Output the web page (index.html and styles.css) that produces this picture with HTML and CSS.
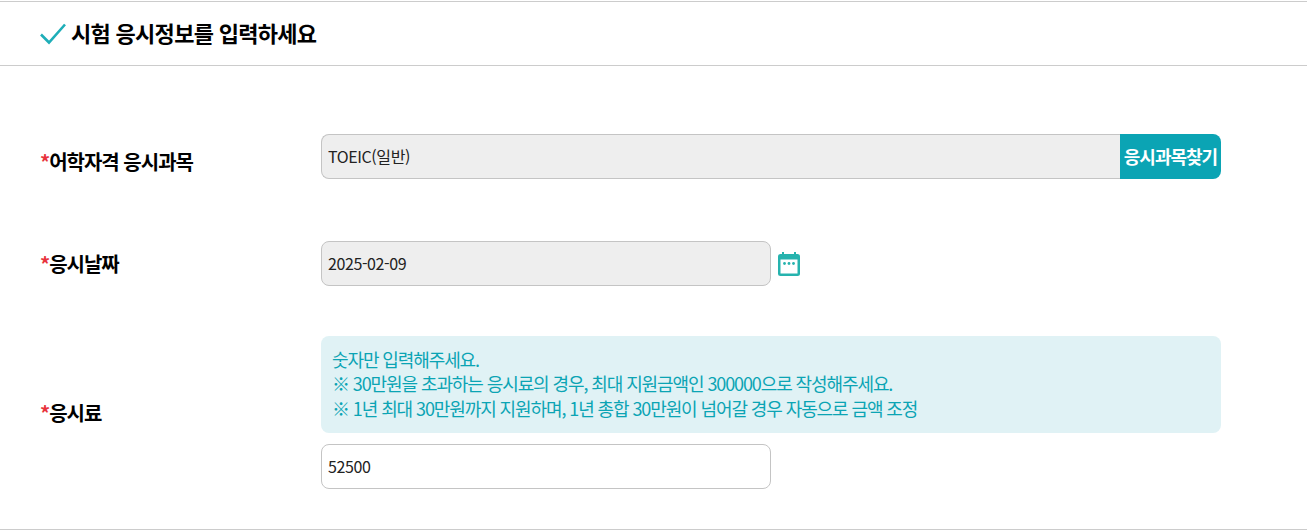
FILE: index.html
```html
<!DOCTYPE html>
<html lang="ko">

	<head>
		<meta charset="utf-8" />
		<title>시험 응시정보</title>
		<link rel="stylesheet" href="styles.css">
	</head>

	<body>
		<div class="title">
			<svg class="check" width="26" height="22" viewBox="0 0 26 22">
				<path d="M1 11.500L9 19.500L25 1.500" fill="none" stroke="#1eaeb8" stroke-width="2.600" />
			</svg>
			<h2>시험 응시정보를 입력하세요</h2>
		</div>
		<div class="form">
			<div class="row row-subject">
				<label class="name"><span class="req">*</span>어학자격 응시과목</label>
				<div class="field">
					<div class="search">
						<input class="box box-search" type="text" value="TOEIC(일반)" readonly>
						<a href="#" class="btn">응시과목찾기</a>
					</div>
				</div>
			</div>
			<div class="row row-date">
				<label class="name"><span class="req">*</span>응시날짜</label>
				<div class="field date">
					<input class="box half" type="text" value="2025-02-09" readonly>
					<svg class="cal" width="24" height="26" viewBox="0 0 24 26">
						<path d="M5 1h2v3H5zM17 1h2v3h-2z" fill="#26b3ae" />
						<rect x="1" y="3" width="22" height="22" rx="2.500" fill="#26b3ae" />
						<rect x="3.500" y="8.500" width="17" height="14" fill="#fff" />
						<circle cx="7.500" cy="12.500" r="1.400" fill="#26b3ae" />
						<circle cx="12" cy="12.500" r="1.400" fill="#26b3ae" />
						<circle cx="16.500" cy="12.500" r="1.400" fill="#26b3ae" />
					</svg>
				</div>
			</div>
			<div class="row row-fee">
				<label class="name"><span class="req">*</span>응시료</label>
				<div class="field">
					<div class="notice">
						숫자만 입력해주세요.<br>
						※ 30만원을 초과하는 응시료의 경우, 최대 지원금액인 300000으로 작성해주세요.<br>
						※ 1년 최대 30만원까지 지원하며, 1년 총합 30만원이 넘어갈 경우 자동으로 금액 조정
					</div>
					<input class="box half white" type="text" value="52500">
				</div>
			</div>
		</div>
	</body>

</html>
```

FILE: styles.css
```css
* {
	margin: 0;
	padding: 0;
	box-sizing: border-box;
}

a {
	text-decoration: none;
}

body {
	height: 529px;
	overflow: hidden;
	background: #fff;
	font-family: "Noto Sans CJK KR", "Noto Sans", sans-serif;
	color: #000;
	margin-top: 1px;
	border-top: 1px solid #ccc;
	border-bottom: 1px solid #ccc;
}

.title {
	display: flex;
	align-items: center;
	height: 64px;
	padding-left: 40px;
	border-bottom: 1px solid #ccc;
}

.check {
	margin-right: 5px;
}

.title h2 {
	font-size: 22px;
	font-weight: 700;
	letter-spacing: -0.7px;
	line-height: 32px;
	padding-bottom: 4px;
}

.form {
	padding: 68px 86px 0 40px;
}

.row {
	display: flex;
	align-items: center;
}

.row-subject .name {
	padding-top: 10px;
}

.row-date {
	margin-top: 62px;
}

.row-fee {
	margin-top: 50px;
}

.name {
	width: 281px;
	font-size: 20px;
	font-weight: 700;
	letter-spacing: -1px;
	line-height: 28px;
}

.req {
	color: #e8333c;
}

.field {
	flex: 1;
}

.date {
	display: flex;
	align-items: center;
}

.search {
	display: flex;
}

.box {
	display: block;
	height: 45px;
	padding: 0 6px 2px 6px;
	border: 1px solid #c4c4c4;
	border-radius: 8px;
	background: #eee;
	font-family: "Noto Sans CJK KR", "Noto Sans", sans-serif;
	font-size: 16px;
	letter-spacing: -0.4px;
	color: #222;
	outline: none;
}

.box-search {
	flex: 1;
	min-width: 0;
	border-right: none;
	border-radius: 8px 0 0 8px;
}

.half {
	width: 450px;
}

.white {
	background: #fff;
}

.btn {
	width: 101px;
	height: 45px;
	line-height: 45px;
	text-align: center;
	background: #0ba4b4;
	border-radius: 0 8px 8px 0;
	color: #fff;
	font-size: 18px;
	font-weight: 700;
	letter-spacing: -1px;
}

.cal {
	margin-left: 6px;
}

.notice {
	height: 97px;
	margin-bottom: 11px;
	padding: 11px;
	background: #e0f2f5;
	border-radius: 8px;
	color: #0ba4b4;
	font-size: 18px;
	letter-spacing: -1.1px;
	line-height: 24.400px;
}
```
